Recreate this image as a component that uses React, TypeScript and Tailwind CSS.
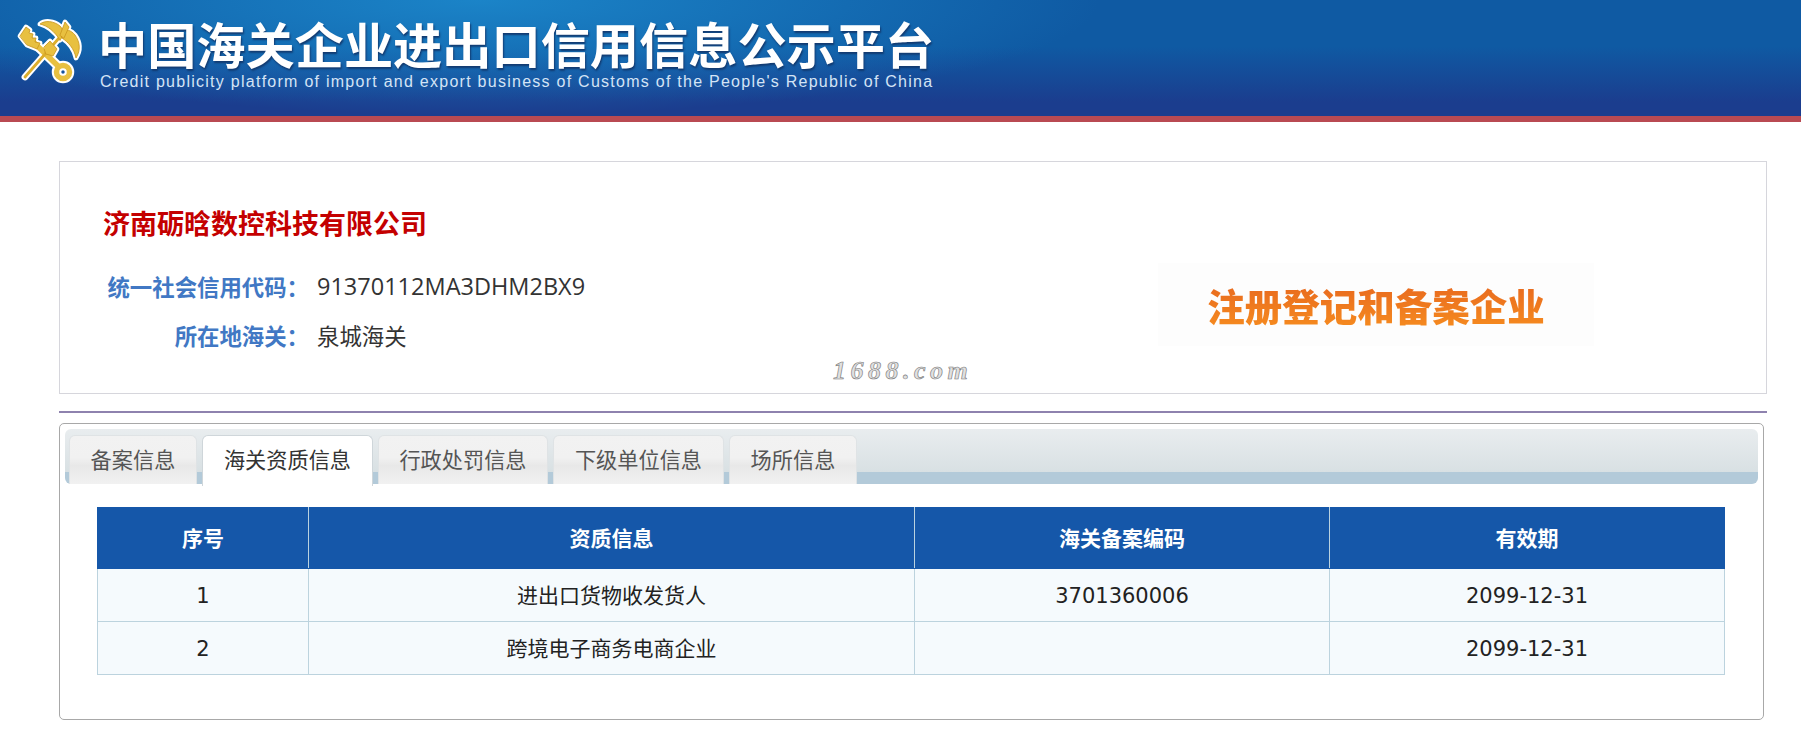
const Logo = ({ fill, stroke, grow }: { fill: string; stroke: string; grow: number }) => (
  <g stroke={stroke} fill={fill} strokeWidth={grow + 0.8} strokeLinejoin="round" strokeLinecap="round">
    <path d="M27 36 L57 65" fill="none" stroke={fill === "#fff" ? "#fff" : "#e8c040"} strokeWidth={5.5 + grow} />
    <path d="M25 77 L59 38" fill="none" stroke={fill === "#fff" ? "#fff" : "#dcae2c"} strokeWidth={2.8 + grow} />
    <path d="M20 36 L26 27 L30 30 L29 33 L33 34 L32 38 L36 38 L35 42 L40 43 L37 49 L27 45 Z" />
    <path d="M60 40 C54 31 48 26 40 24 C45 20 54 21 60 26 C64 30 64 36 60 40 Z" />
    <path d="M62 38 C68 42 74 48 76 58 C81 50 80 42 75 35 C71 30 66 29 63 31 Z" />
    <path d="M60 35 L65 22 L69 27 L64 38 Z" />
    <path d="M44 47 L50 41 L57 49 L53 56 L46 54 Z" />
    <circle cx="63" cy="72" r="6.5" fill="none" stroke={fill === "#fff" ? "#fff" : "#e8c040"} strokeWidth={5.5 + grow} />
  </g>
);

const rows = [
  ["1", "进出口货物收发货人", "3701360006", "2099-12-31"],
  ["2", "跨境电子商务电商企业", "", "2099-12-31"],
];

const tabs = [
  { label: "备案信息", active: false, w: "w-[128px]" },
  { label: "海关资质信息", active: true, w: "w-[171px]" },
  { label: "行政处罚信息", active: false, w: "w-[170px]" },
  { label: "下级单位信息", active: false, w: "w-[171px]" },
  { label: "场所信息", active: false, w: "w-[128px]" },
];

const heads = ["序号", "资质信息", "海关备案编码", "有效期"];

export default function App() {
  return (
    <div className="h-[740px] overflow-hidden bg-white font-['Noto_Sans_CJK_SC',sans-serif]">
      <header className="flex h-[122px] border-b-[6px] border-[#b94a52] bg-[radial-gradient(ellipse_620px_115px_at_480px_0px,#1b84c8_0%,#1b84c800_100%),linear-gradient(#0f5aa3_0%,#0f5aa3_40%,#1b3d8e_88%,#1b3d8e_100%)]">
        <svg className="h-[90px] w-[98px] shrink-0" viewBox="0 0 98 90">
          <Logo fill="#fff" stroke="#fff" grow={4} />
          <Logo fill="#e8c040" stroke="#c9951c" grow={0} />
        </svg>
        <div className="flex flex-col pt-[14px]">
          <div className="text-[49.2px] leading-[58px] font-bold whitespace-nowrap text-white [text-shadow:1px_2px_2px_#123a70]">
            中国海关企业进出口信用信息公示平台
          </div>
          <div className="mt-px ml-[2px] font-['Liberation_Sans',sans-serif] text-[16px] leading-[18px] tracking-[1.26px] whitespace-nowrap text-[#d4e4f6]">
            Credit publicity platform of import and export business of Customs of the People's Republic of China
          </div>
        </div>
      </header>

      <main className="pt-[39px] pl-[59px]">
        <section className="relative mr-[34px] flex h-[233px] justify-between border border-[#d6d6dc] pr-[172px] pl-[43px]">
          <div className="pt-[41px]">
            <h1 className="text-[27px] leading-[40px] font-bold whitespace-nowrap text-[#c40000]">济南砺晗数控科技有限公司</h1>
            <dl className="mt-[28px] flex flex-col gap-[19px] text-[22.4px] leading-[30px]">
              <div className="flex">
                <dt className="w-[206px] shrink-0 text-right font-bold whitespace-nowrap text-[#4178c4]">统一社会信用代码：</dt>
                <dd className="pl-2 font-['Open_Sans','Noto_Sans_CJK_SC',sans-serif] text-[23.5px] text-[#333]">91370112MA3DHM2BX9</dd>
              </div>
              <div className="flex">
                <dt className="w-[206px] shrink-0 text-right font-bold whitespace-nowrap text-[#4178c4]">所在地海关：</dt>
                <dd className="pl-2 text-[#333]">泉城海关</dd>
              </div>
            </dl>
          </div>
          <div className="mt-[101px] flex h-[83px] w-[436px] items-center justify-center bg-[#fdfdfd]">
            <span className="bg-[linear-gradient(#e8691f,#f58a1f)] bg-clip-text text-[37.5px] leading-[44px] font-black whitespace-nowrap text-transparent">
              注册登记和备案企业
            </span>
          </div>
          <span className="absolute top-[194px] left-[773px] font-['Liberation_Serif',serif] text-[26px] leading-[30px] font-bold tracking-[4.5px] text-[#e0e0e0] italic [-webkit-text-stroke:0.6px_#777]">
            1688.com
          </span>
        </section>

        <div className="mt-[17px] mr-[34px] h-0.5 bg-[#8e82ae]" />

        <section className="mt-[10px] mr-[37px] h-[297px] rounded-[5px] border border-[#a8a8a8] px-[5px] pt-[5px]">
          <nav className="flex h-[55px] gap-[5px] rounded-[6px] bg-[linear-gradient(#e9edef_0%,#d8e0e3_79%,#b3cad9_79%,#b3cad9_100%)] pt-1.5 pl-1">
            {tabs.map((t) => (
              <div
                key={t.label}
                className={
                  t.active
                    ? `${t.w} z-10 h-[51px] rounded-t-[6px] border border-b-0 border-[#cfd6da] bg-white pt-2 text-center text-[21.2px] leading-[30px] text-[#333]`
                    : `${t.w} h-[49px] rounded-t-[6px] border border-b-0 border-[#dfe3e5] bg-[linear-gradient(#f2f2f2_0%,#f1f1f1_45%,#e8e8e8_62%,#f1f1f1_100%)] pt-2 text-center text-[21.2px] leading-[30px] text-[#555]`
                }
              >
                {t.label}
              </div>
            ))}
          </nav>
          <table className="mt-[23px] ml-[32px] w-[1627px] table-fixed border-collapse font-['DejaVu_Sans','Noto_Sans_CJK_SC',sans-serif] text-[21px]">
            <colgroup>
              <col className="w-[211px]" />
              <col className="w-[606px]" />
              <col className="w-[415px]" />
              <col className="w-[395px]" />
            </colgroup>
            <thead>
              <tr className="h-[61px] bg-[#1557a9]">
                {heads.map((h) => (
                  <th key={h} className="border border-[#b9d2e0] border-t-[#1557a9] border-b-[#1557a9] font-['Noto_Sans_CJK_SC',sans-serif] font-bold text-white first:border-l-[#1557a9] last:border-r-[#1557a9]">
                    {h}
                  </th>
                ))}
              </tr>
            </thead>
            <tbody>
              {rows.map((r) => (
                <tr key={r[0]} className="h-[53px] bg-[#f5fafd]">
                  {r.map((c, i) => (
                    <td key={i} className="border border-[#bcd3de] pt-[3px] text-center text-[#222]">
                      {c}
                    </td>
                  ))}
                </tr>
              ))}
            </tbody>
          </table>
        </section>
      </main>
    </div>
  );
}
